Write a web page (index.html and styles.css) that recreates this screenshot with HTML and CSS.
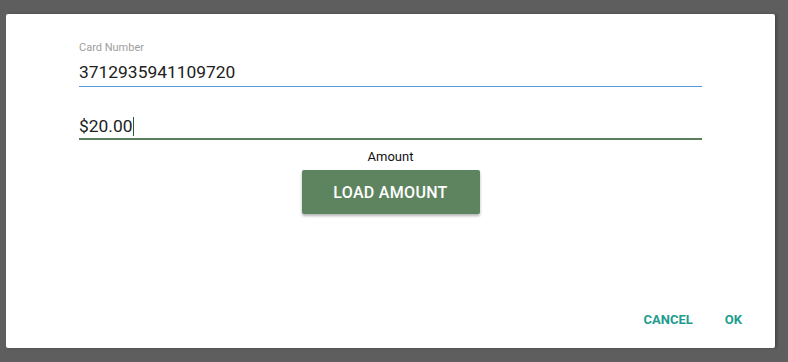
FILE: index.html
```html
<!DOCTYPE html>
<html lang="en">
<head>
<meta charset="UTF-8">
<meta name="viewport" content="width=device-width, initial-scale=1.0">
<title>Load Card</title>
<link rel="stylesheet" href="styles.css">
</head>
<body>

<div class="dialog">
    <div class="content">
        <div class="field">
            <label class="field-label" for="cardNumber">Card Number</label>
            <div class="field-input card">3712935941109720</div>
        </div>
        <div class="field">
            <div class="field-input amount">$20.00<span class="caret"></span></div>
        </div>
        <div class="amount-label">Amount</div>
        <button class="load-button">LOAD AMOUNT</button>
    </div>
    <div class="actions">
        <button class="action">CANCEL</button>
        <button class="action">OK</button>
    </div>
</div>

</body>
</html>
```

FILE: styles.css
```css
body {
    margin: 0;
    height: 362px;
    background-color: #5e5e5e;
    font-family: Roboto, 'Liberation Sans', Arial, sans-serif;
    padding: 14px 0 0 6px;
    box-sizing: border-box;
    overflow: hidden;
}

.dialog {
    width: 769px;
    height: 334px;
    background-color: #fff;
    border-radius: 2px;
    box-shadow: 2px 0 3px rgba(0, 0, 0, 0.25);
    display: flex;
    flex-direction: column;
    justify-content: space-between;
}

.content {
    padding: 27px 73px 0 73px;
    display: flex;
    flex-direction: column;
}

.field-label {
    display: block;
    font-size: 11px;
    line-height: 14px;
    color: #9e9e9e;
}

.field-input {
    font-size: 17.4px;
    line-height: 20px;
    color: #212121;
    padding-bottom: 4px;
}

.card {
    margin-top: 7px;
    border-bottom: 1px solid #5499e0;
}

.amount {
    margin-top: 29px;
    border-bottom: 2px solid #5b7f5c;
    padding-bottom: 2px;
}

.caret {
    display: inline-block;
    width: 1px;
    height: 19px;
    background-color: #2e5a2f;
    vertical-align: -4px;
    margin-left: 1px;
}

.amount-label {
    text-align: center;
    font-size: 13px;
    line-height: 16px;
    margin-top: 9px;
    color: #111;
}

.load-button {
    align-self: center;
    margin-top: 5px;
    width: 178px;
    height: 44px;
    border: none;
    border-radius: 2px;
    background-color: #5e845f;
    color: #fff;
    font-family: Roboto, 'Liberation Sans', Arial, sans-serif;
    font-size: 16px;
    font-weight: 500;
    letter-spacing: 0.3px;
    box-shadow: 0 2px 3px rgba(0, 0, 0, 0.3);
    cursor: pointer;
}

.actions {
    display: flex;
    justify-content: flex-end;
    gap: 16px;
    padding: 0 25px 15px 0;
}

.action {
    border: none;
    background: none;
    padding: 0 8px;
    height: 28px;
    color: #1e9c8e;
    font-family: Roboto, 'Liberation Sans', Arial, sans-serif;
    font-size: 13px;
    font-weight: 700;
    cursor: pointer;
}
```
